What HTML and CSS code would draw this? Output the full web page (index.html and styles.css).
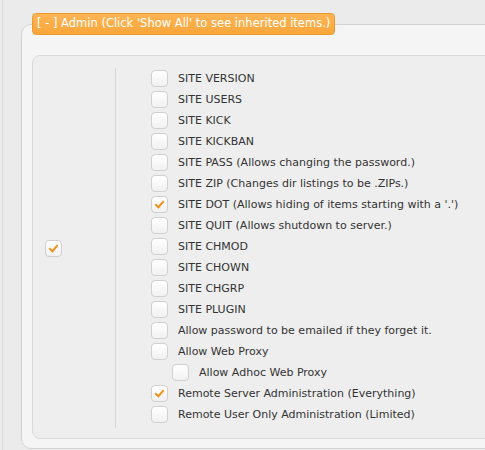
FILE: index.html
```html
<!DOCTYPE html>
<html>
<head>
<meta charset="utf-8">
<link rel="stylesheet" href="styles.css">
</head>
<body>
<div class="page">
  <fieldset class="group">
    <legend class="legend">[ - ] Admin (Click 'Show All' to see inherited items.)</legend>
    <div class="panel">
      <div class="master">
        <span class="cb checked"><svg viewBox="0 0 17 17"><path d="M4.5 9 L7.3 11.6 L12.5 5.6"/></svg></span>
      </div>
      <ul class="list">
        <li class="row"><span class="cb"></span><span class="label">SITE VERSION</span></li>
        <li class="row"><span class="cb"></span><span class="label">SITE USERS</span></li>
        <li class="row"><span class="cb"></span><span class="label">SITE KICK</span></li>
        <li class="row"><span class="cb"></span><span class="label">SITE KICKBAN</span></li>
        <li class="row"><span class="cb"></span><span class="label">SITE PASS (Allows changing the password.)</span></li>
        <li class="row"><span class="cb"></span><span class="label">SITE ZIP (Changes dir listings to be .ZIPs.)</span></li>
        <li class="row"><span class="cb checked"><svg viewBox="0 0 17 17"><path d="M4.5 9 L7.3 11.6 L12.5 5.6"/></svg></span><span class="label">SITE DOT (Allows hiding of items starting with a '.')</span></li>
        <li class="row"><span class="cb"></span><span class="label">SITE QUIT (Allows shutdown to server.)</span></li>
        <li class="row"><span class="cb"></span><span class="label">SITE CHMOD</span></li>
        <li class="row"><span class="cb"></span><span class="label">SITE CHOWN</span></li>
        <li class="row"><span class="cb"></span><span class="label">SITE CHGRP</span></li>
        <li class="row"><span class="cb"></span><span class="label">SITE PLUGIN</span></li>
        <li class="row"><span class="cb"></span><span class="label">Allow password to be emailed if they forget it.</span></li>
        <li class="row"><span class="cb"></span><span class="label">Allow Web Proxy</span></li>
        <li class="row sub"><span class="cb"></span><span class="label">Allow Adhoc Web Proxy</span></li>
        <li class="row"><span class="cb checked"><svg viewBox="0 0 17 17"><path d="M4.5 9 L7.3 11.6 L12.5 5.6"/></svg></span><span class="label">Remote Server Administration (Everything)</span></li>
        <li class="row"><span class="cb"></span><span class="label">Remote User Only Administration (Limited)</span></li>
      </ul>
    </div>
  </fieldset>
</div>
</body>
</html>
```
FILE: styles.css
```css
html, body {
  margin: 0;
  padding: 0;
  background: #ebebeb;
  overflow: hidden;
}
body {
  width: 485px;
  height: 450px;
  font-family: "DejaVu Sans", sans-serif;
  font-size: 11px;
  color: #333;
}
.page {
  margin-left: 2px;
  border-left: 1px solid #dadada;
  padding-left: 18px;
  padding-top: 13px;
  height: 437px;
  width: 464px;
  overflow: hidden;
  background: #ebebeb;
}
.group {
  margin: 0;
  width: 520px;
  box-sizing: border-box;
  border: 1px solid #d2d2d2;
  border-radius: 10px;
  background: #f5f5f5;
  padding: 10px 10px 9px 10px;
}
.legend {
  margin-left: 0;
  padding: 3px 4px 4px 4px;
  background: linear-gradient(#fdb554, #f9a63a);
  border: 1px solid #eb9a2e;
  border-radius: 4px;
  color: #fff;
  font-size: 11.5px;
  line-height: 13px;
}
.panel {
  display: flex;
  align-items: stretch;
  background: #eeeeee;
  border: 1px solid #dadada;
  border-radius: 8px;
  padding: 12px 0 10px 0;
  margin-top: 10px;
}
.master {
  width: 82px;
  box-sizing: border-box;
  padding-left: 12px;
  display: flex;
  align-items: center;
}
.list {
  list-style: none;
  margin: 0;
  padding: 0 0 3px 35px;
  border-left: 1px solid #d6d6d6;
}
.row {
  display: flex;
  align-items: center;
  height: 21px;
}
.row.sub {
  padding-left: 21px;
}
.cb {
  width: 17px;
  height: 17px;
  box-sizing: border-box;
  border: 1px solid #d0d0d0;
  border-radius: 4px;
  background: linear-gradient(#ffffff, #f1f1f1);
  flex: none;
  display: block;
}
.cb svg {
  display: block;
  width: 15px;
  height: 15px;
  margin: 0;
}
.cb svg path {
  fill: none;
  stroke: #f39019;
  stroke-width: 2.2;
  stroke-linecap: square;
}
.label {
  margin-left: 10px;
  white-space: nowrap;
}
```
